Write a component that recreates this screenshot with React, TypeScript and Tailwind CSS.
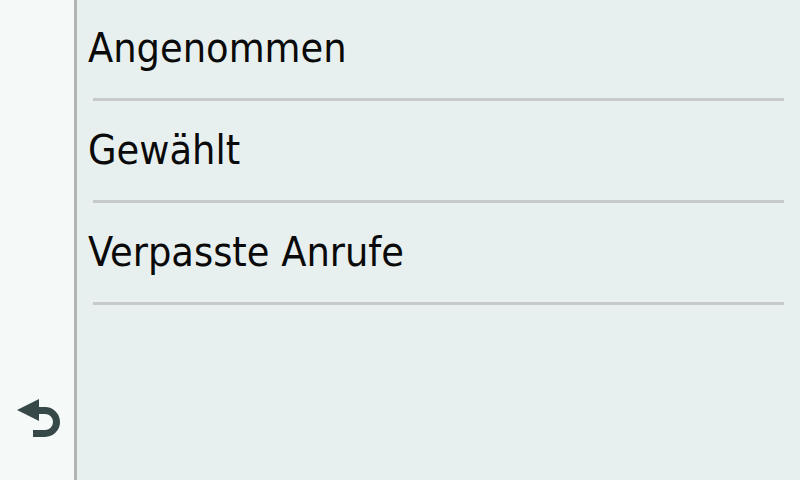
export default function App() {
  const items = ["Angenommen", "Gewählt", "Verpasste Anrufe"];

  return (
    <div className="flex h-[480px] w-[800px] overflow-hidden bg-[#e8f0ef] font-['DejaVu_Sans_Condensed','DejaVu_Sans',sans-serif]">
      <div className="flex w-[74px] shrink-0 flex-col justify-end bg-[#f5faf8] pb-[36px] pl-[14px]">
        <svg width="48" height="48" viewBox="14 396 48 48" className="block">
          <path d="M17 410 L39 399 L39 421 Z" fill="#374848" />
          <path
            d="M38 410.5 H45 A11.5 11.5 0 0 1 45 433.5 H33"
            fill="none"
            stroke="#374848"
            strokeWidth="7"
          />
        </svg>
      </div>
      <div className="w-[3px] shrink-0 bg-[#b3b4b4]" />
      <div className="flex flex-1 flex-col">
        {items.map((label, i) => (
          <div key={label} className="flex flex-col">
            <div
              className={`flex items-center pl-[11px] text-[41px] leading-[1.164] text-[#0a0a0a] ${
                i === 0 ? "h-[98px]" : "h-[99px]"
              }`}
            >
              {label}
            </div>
            <div className="mx-[16px] h-[3px] bg-[#c7c9cb]" />
          </div>
        ))}
      </div>
    </div>
  );
}
